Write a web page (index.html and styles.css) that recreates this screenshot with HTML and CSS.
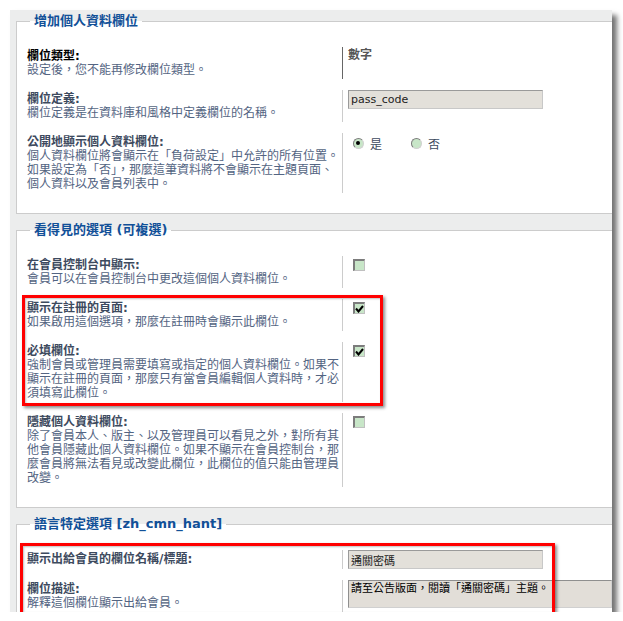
FILE: index.html
```html
<!DOCTYPE html>
<html lang="zh-Hant">
<head>
    <meta charset="UTF-8">
    <title>增加個人資料欄位</title>
    <link rel="stylesheet" href="styles.css">
</head>
<body>
    <div class="panel">
        <fieldset class="group">
            <legend>增加個人資料欄位</legend>
            <dl class="row row-first">
                <dt><strong class="type">欄位類型:</strong><br><span class="explain">設定後，您不能再修改欄位類型。</span></dt>
                <dd><strong class="value">數字</strong></dd>
            </dl>
            <dl class="row">
                <dt><label>欄位定義:</label><br><span class="explain">欄位定義是在資料庫和風格中定義欄位的名稱。</span></dt>
                <dd><input class="text" type="text" value="pass_code"></dd>
            </dl>
            <dl class="row">
                <dt><label>公開地顯示個人資料欄位:</label><br><span class="explain">個人資料欄位將會顯示在「負荷設定」中允許的所有位置。<br>如果設定為「否」，那麼這筆資料將不會顯示在主題頁面、<br>個人資料以及會員列表中。</span></dt>
                <dd class="radios">
                    <span class="radio checked"></span><span class="radio-label">是</span>
                    <span class="radio"></span><span class="radio-label">否</span>
                </dd>
            </dl>
        </fieldset>

        <fieldset class="group">
            <legend>看得見的選項 (可複選)</legend>
            <dl class="row">
                <dt><label>在會員控制台中顯示:</label><br><span class="explain">會員可以在會員控制台中更改這個個人資料欄位。</span></dt>
                <dd><span class="check"></span></dd>
            </dl>
            <div class="marked">
                <span class="mark mark-visible"></span>
                <dl class="row">
                    <dt><label>顯示在註冊的頁面:</label><br><span class="explain">如果啟用這個選項，那麼在註冊時會顯示此欄位。</span></dt>
                    <dd><span class="check"><svg width="9" height="8" viewBox="0 0 9 8"><path d="M1 3.5 L3.5 6.5 L8 1" fill="none" stroke="#000" stroke-width="2"/></svg></span></dd>
                </dl>
                <dl class="row">
                    <dt><label>必填欄位:</label><br><span class="explain">強制會員或管理員需要填寫或指定的個人資料欄位。如果不<br>顯示在註冊的頁面，那麼只有當會員編輯個人資料時，才必<br>須填寫此欄位。</span></dt>
                    <dd><span class="check"><svg width="9" height="8" viewBox="0 0 9 8"><path d="M1 3.5 L3.5 6.5 L8 1" fill="none" stroke="#000" stroke-width="2"/></svg></span></dd>
                </dl>
            </div>
            <dl class="row">
                <dt><label>隱藏個人資料欄位:</label><br><span class="explain">除了會員本人、版主、以及管理員可以看見之外，對所有其<br>他會員隱藏此個人資料欄位。如果不顯示在會員控制台，那<br>麼會員將無法看見或改變此欄位，此欄位的值只能由管理員<br>改變。</span></dt>
                <dd><span class="check"></span></dd>
            </dl>
        </fieldset>

        <fieldset class="group group-last">
            <legend>語言特定選項 [zh_cmn_hant]</legend>
            <div class="marked">
                <span class="mark mark-lang"></span>
                <dl class="row">
                    <dt><label>顯示出給會員的欄位名稱/標題:</label></dt>
                    <dd><input class="text" type="text" value="通關密碼"></dd>
                </dl>
                <dl class="row">
                    <dt><label>欄位描述:</label><br><span class="explain">解釋這個欄位顯示出給會員。</span></dt>
                    <dd><textarea class="area">請至公告版面，閱讀「通關密碼」主題。</textarea></dd>
                </dl>
            </div>
        </fieldset>
    </div>
</body>
</html>
```

FILE: styles.css
```css
* {
    box-sizing: border-box;
}

body {
    margin: 0;
    background: #fff;
    font-family: "DejaVu Sans", "Noto Sans CJK TC", sans-serif;
    font-size: 12px;
    line-height: 14px;
}

.panel {
    margin: 10px 0 0 10px;
    width: 602px;
    padding-top: 3px;
    background: #eceded;
    box-shadow: 5px 5px 5px rgba(0, 0, 0, 0.55);
}

.group {
    margin: 0 0 8px 6px;
    padding: 18px 0 9px 10px;
    border: 1px solid #cccccc;
    border-right: none;
    background: #fff;
}

.group-last {
    margin-bottom: 0;
    padding-bottom: 0;
    border-bottom: none;
}

.group legend {
    margin-left: 3px;
    padding: 0 4px;
    font-size: 13px;
    line-height: 16px;
    font-weight: bold;
    color: #115098;
}

.row {
    display: flex;
    margin: 0 0 11px 0;
}

.group-last .row:last-child {
    margin-bottom: 0;
}

.row dt {
    flex: none;
    width: 316px;
    padding: 2px 0;
    border-right: 1px solid #cccccc;
}

.row-first dt {
    border-right-color: #666;
}

.row dd {
    margin: 0;
    padding-left: 5px;
}

.row label {
    font-weight: bold;
    color: #3d4a5e;
}

.type {
    color: #000;
}

.explain {
    color: #536482;
}

.value {
    display: block;
    padding-top: 1px;
    color: #555;
}

.text {
    width: 195px;
    height: 19px;
    margin: 0;
    padding: 1px 2px;
    font-family: inherit;
    font-size: 11px;
    color: #222;
    background: #e3e0da;
    border: 1px solid;
    border-color: #9a9a9a #c8c8c8 #c8c8c8 #9a9a9a;
}

.area {
    display: block;
    width: 264px;
    height: 28px;
    margin: 0;
    padding: 1px 2px;
    font-family: inherit;
    font-size: 11px;
    line-height: 14px;
    color: #000;
    background: #e2ded8;
    border: 1px solid;
    border-color: #8f8f8f #d0d0d0 #d0d0d0 #8f8f8f;
    resize: none;
    overflow: hidden;
}

.check {
    display: flex;
    align-items: flex-end;
    justify-content: center;
    width: 12px;
    height: 12px;
    margin: 3px 0 0 5px;
    background: #c8e6c8;
    border: 1px solid;
    border-width: 2px 1px 1px 2px;
    border-color: #7c7c7c #c0c0c0 #c0c0c0 #7c7c7c;
}

.radios {
    display: flex;
    align-items: center;
    height: 18px;
    padding-top: 3px;
}

.radio {
    position: relative;
    width: 11px;
    height: 11px;
    margin-left: 5px;
    border-radius: 50%;
    background: #c8e6c8;
    border: 1px solid;
    border-color: #7c7c7c #d0d0d0 #d0d0d0 #7c7c7c;
}

.radio.checked::after {
    content: "";
    position: absolute;
    left: 2px;
    top: 2px;
    width: 4px;
    height: 4px;
    border-radius: 50%;
    background: #000;
}

.radio-label {
    margin: 3px 24px 0 6px;
    color: #3d4a5e;
}

.marked {
    position: relative;
}

.mark {
    position: absolute;
    border: 3px solid #ff0000;
    box-shadow: 2px 2px 3px rgba(0, 0, 0, 0.45), inset 1px 1px 2px rgba(0, 0, 0, 0.25);
    pointer-events: none;
    z-index: 2;
}

.mark-visible {
    top: -4px;
    bottom: -4px;
    left: -5px;
    width: 361px;
}

.mark-lang {
    top: -7px;
    bottom: -3px;
    left: -7px;
    width: 535px;
}
```
